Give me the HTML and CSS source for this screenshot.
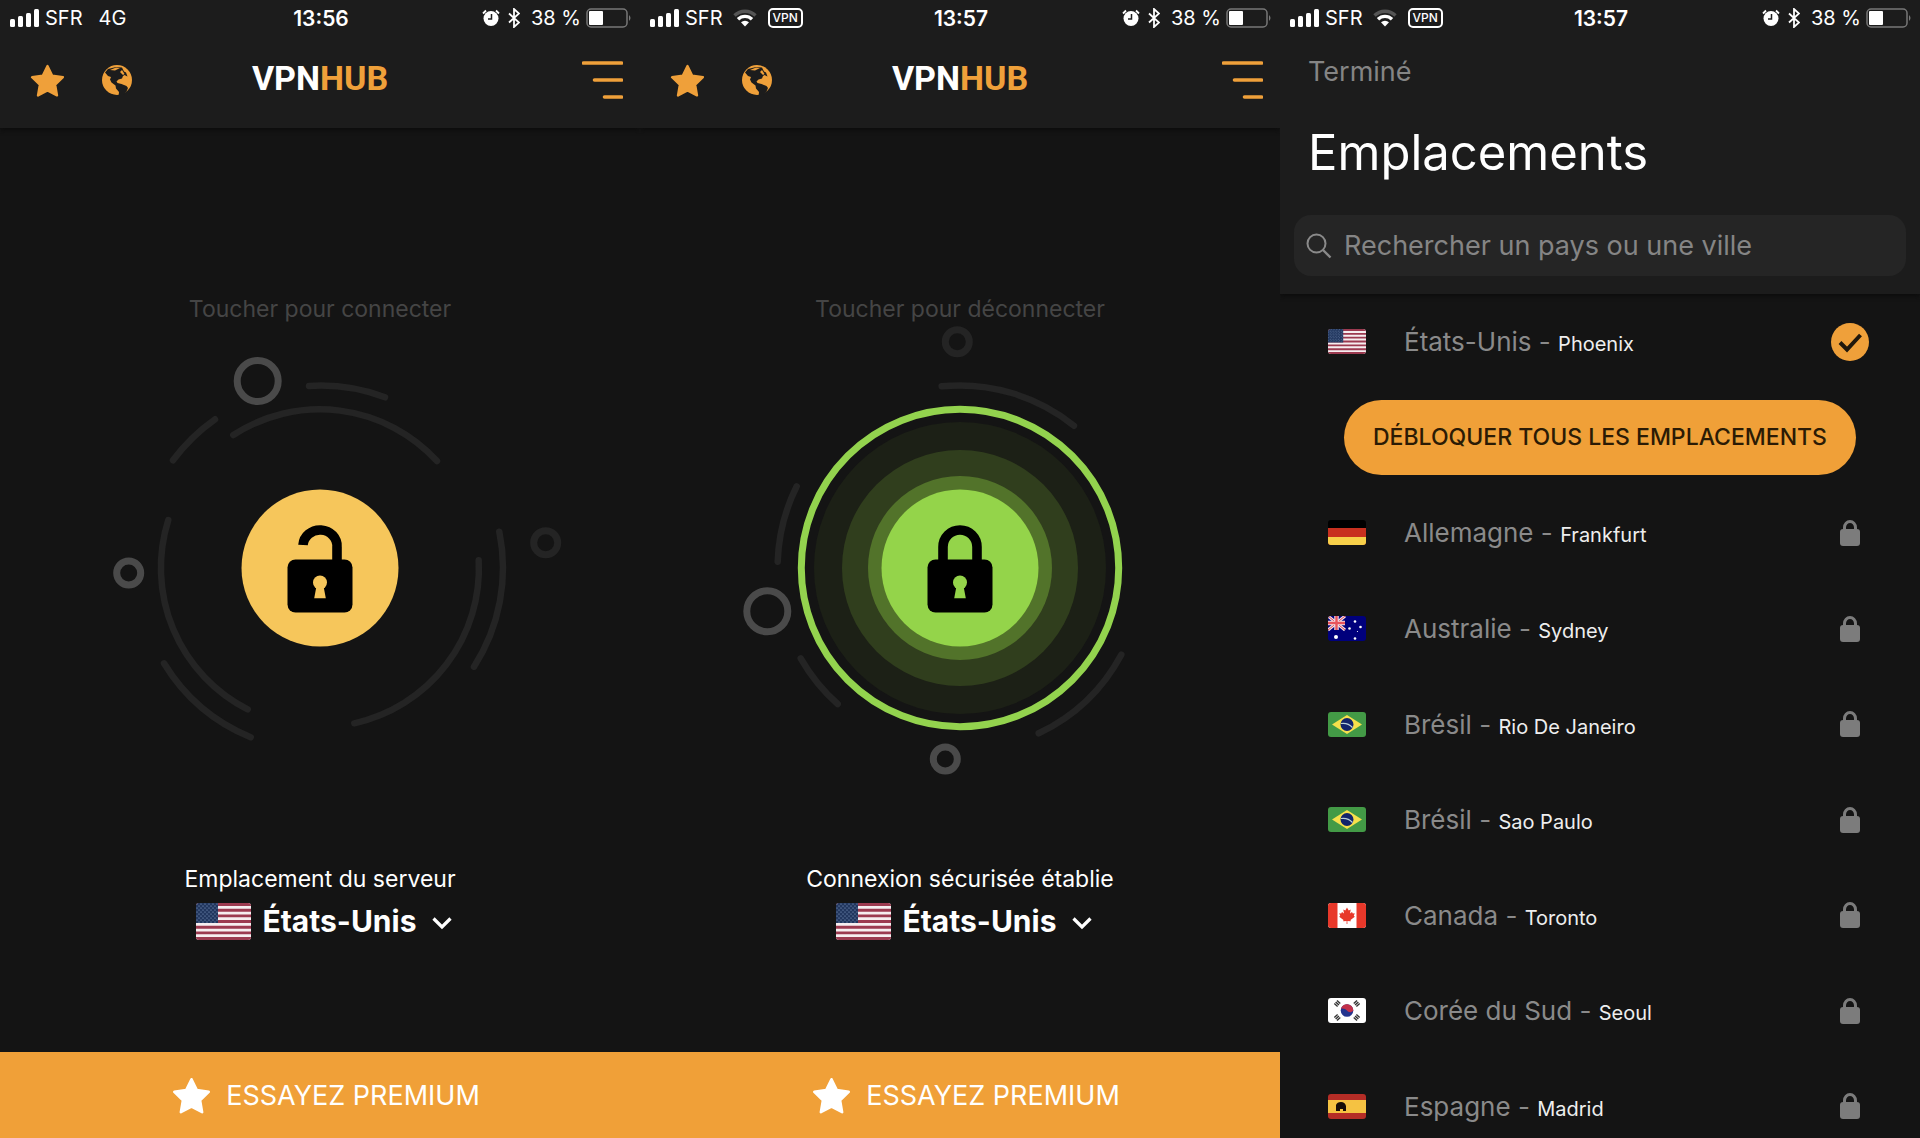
FILE: index.html
```html
<!DOCTYPE html>
<html lang="fr">
<head>
    <meta charset="UTF-8">
    <meta name="viewport" content="width=device-width, initial-scale=1.0">
    <title>VPNHUB</title>
    <link rel="stylesheet" href="styles.css">
</head>
<body>
    <!-- Icônes et drapeaux partagés -->
    <svg class="sprite" aria-hidden="true">
        <symbol id="signal" viewBox="0 0 30 18">
            <rect x="0" y="10" width="5" height="8" rx="1.5"/>
            <rect x="8" y="7" width="5" height="11" rx="1.5"/>
            <rect x="16" y="4" width="5" height="14" rx="1.5"/>
            <rect x="24" y="0" width="5" height="18" rx="1.5"/>
        </symbol>
        <symbol id="wifi" viewBox="0 0 24 18">
            <path d="M1.5 6.5a15 15 0 0 1 21 0" fill="none" stroke="#555" stroke-width="3.4"/>
            <path d="M5 10.2a10 10 0 0 1 14 0" fill="none" stroke="#fff" stroke-width="3.4"/>
            <path d="M12 17.5l-4-4.2a6 6 0 0 1 8 0z"/>
        </symbol>
        <symbol id="alarm" viewBox="0 0 18 18">
            <circle cx="9" cy="9.5" r="7.5"/>
            <path d="M1 4.5l3-3M17 4.5l-3-3" stroke="#fff" stroke-width="1.8"/>
            <path d="M9.5 5v5H6" fill="none" stroke="#1c1c1c" stroke-width="1.5"/>
        </symbol>
        <symbol id="bluetooth" viewBox="0 0 12 20">
            <path d="M1 5.5l10 9-5 4.500V1l5 4.500-10 9" fill="none" stroke="#fff" stroke-width="1.8"/>
        </symbol>
        <symbol id="battery" viewBox="0 0 46 20">
            <rect x="1" y="1" width="40" height="18" rx="4" fill="none" stroke="#777" stroke-width="1.5"/>
            <rect x="3" y="3" width="14" height="14" rx="1"/>
            <path d="M43 7q3 3 0 6z" fill="#777"/>
        </symbol>
        <symbol id="star" viewBox="0 0 36 34">
            <path d="M18 2l4.900 10 11 1.600-8 7.800 1.900 11L18 27.200l-9.800 5.200 1.900-11-8-7.800 11-1.600z" stroke="currentColor" stroke-width="2.4" stroke-linejoin="round"/>
        </symbol>
        <symbol id="globe" viewBox="0 0 30 30">
            <circle cx="15" cy="15" r="15"/>
            <path fill="#1c1c1c" d="M3 7.500L6 4l8-2 6 .500 2 4 2 1 1.500 4-3-1.500-1.500 1-1 2.500-3.500 1-2 2 1 1.500 4 1 5 2 1.500 2-1.500 3.500-3.500 4-3 3.500-1.500-2 .500-5-3-3.500-.500-3-4-3-1.500-3 1-2.500-3-1z"/>
            <path d="M8 5l6-2.500 4 .500-5 2.500zM18 7l2-2 2.500 4-1.500 1z"/>
        </symbol>
        <symbol id="menu" viewBox="0 0 41 38">
            <path d="M1.500 2h38M12.500 19h27M22.500 36h17" stroke="currentColor" stroke-width="3.6" stroke-linecap="round"/>
        </symbol>
        <symbol id="chevron" viewBox="0 0 20 14">
            <path d="M1.500 2.500l8.500 8.500 8.500-8.500" fill="none" stroke="#fff" stroke-width="3.2"/>
        </symbol>
        <symbol id="search" viewBox="0 0 26 26">
            <circle cx="10.5" cy="10.5" r="9" fill="none" stroke="#8a8a8a" stroke-width="2"/>
            <path d="M17 17l7.500 7.500" stroke="#8a8a8a" stroke-width="2.4"/>
        </symbol>
        <symbol id="check" viewBox="0 0 38 38">
            <circle cx="19" cy="19" r="19" fill="#efa03a"/>
            <path d="M9 19.500l7 7L29.500 12" fill="none" stroke="#20180c" stroke-width="4"/>
        </symbol>
        <symbol id="lock" viewBox="0 0 22 26">
            <rect x="1" y="9" width="20" height="17" rx="3"/>
            <path d="M5.500 11V7.500a5.500 6 0 0 1 11 0V11" fill="none" stroke="#7c7c7c" stroke-width="3"/>
        </symbol>

        <pattern id="stars" width="4" height="4" patternUnits="userSpaceOnUse">
            <circle cx="1" cy="1" r=".6" fill="#8fa8cc"/>
            <circle cx="3" cy="3" r=".6" fill="#8fa8cc"/>
        </pattern>
        <symbol id="flag-us" viewBox="0 0 55 37" preserveAspectRatio="none">
            <rect width="55" height="37" fill="#f6eef0"/>
            <path d="M0 1.500h55M0 7.200h55M0 12.800h55M0 18.500h55M0 24.200h55M0 29.900h55M0 35.500h55" stroke="#9c3a50" stroke-width="2.85"/>
            <rect width="22" height="20" fill="#22375f"/>
            <rect width="22" height="20" fill="url(#stars)"/>
        </symbol>
        <symbol id="flag-de" viewBox="0 0 38 25" preserveAspectRatio="none">
            <rect width="38" height="25" fill="#000"/>
            <rect y="8" width="38" height="17" fill="#c8301f"/>
            <rect y="17" width="38" height="8" fill="#f7d04a"/>
        </symbol>
        <symbol id="flag-au" viewBox="0 0 38 25" preserveAspectRatio="none">
            <rect width="38" height="25" fill="#00007c"/>
            <path d="M0 0l17 14M17 0L0 14" stroke="#f3dfe6" stroke-width="3"/>
            <path d="M0 0l17 14M17 0L0 14" stroke="#e0454f" stroke-width="1"/>
            <path d="M8.500 0v14M0 7h17" stroke="#f3dfe6" stroke-width="4.5"/>
            <path d="M8.500 0v14M0 7h17" stroke="#e8545c" stroke-width="2.4"/>
            <g fill="#fff">
                <circle cx="8" cy="21" r="2"/>
                <circle cx="27" cy="5.5" r="1.3"/>
                <circle cx="21.5" cy="12.5" r="1.3"/>
                <circle cx="32.5" cy="11" r="1.3"/>
                <circle cx="27" cy="22.5" r="1.3"/>
                <circle cx="29.5" cy="15.5" r=".6"/>
            </g>
        </symbol>
        <symbol id="flag-br" viewBox="0 0 38 25" preserveAspectRatio="none">
            <rect width="38" height="25" fill="#439a46"/>
            <path d="M4 12.500L19 3l15 9.500L19 22z" fill="#f6e04c"/>
            <circle cx="19" cy="12.5" r="6.5" fill="#12246b"/>
            <path d="M13 11.500q7-1 11.500 4" fill="none" stroke="#b9d0d8" stroke-width="1.2"/>
        </symbol>
        <symbol id="flag-ca" viewBox="0 0 38 25" preserveAspectRatio="none">
            <rect width="38" height="25" fill="#fff"/>
            <path d="M0 0h9.500v25H0zM28.500 0H38v25h-9.500z" fill="#e8382a"/>
            <path d="M19 4.500l1.700 3 2-1-.7 4 2-1.500.8 1.500 2-.2-1 2.500 1 .9-4.300 3.300.4 1.300-3.500-.4V21h-.8v-3.100l-3.500.4.4-1.300-4.300-3.300 1-.9-1-2.500 2 .2.8-1.500 2 1.500-.7-4 2 1z" fill="#e8382a"/>
        </symbol>
        <symbol id="flag-kr" viewBox="0 0 38 25" preserveAspectRatio="none">
            <rect width="38" height="25" fill="#fff"/>
            <circle cx="19" cy="12.5" r="6.3" fill="#24348f"/>
            <path d="M12.900 11a6.300 6.300 0 0 1 12.400 1.500c-2.300 3-5 1.500-6.300 0s-4.500-2.500-6.100-1.500z" fill="#c3304a"/>
            <path d="M7.500 7.500l4-4.500M30.500 7.500l-4-4.500M7.500 17.500l4 4.500M30.500 17.500l-4 4.500" stroke="#333" stroke-width="4.4" stroke-dasharray="1.4 .6"/>
        </symbol>
        <symbol id="flag-es" viewBox="0 0 38 25" preserveAspectRatio="none">
            <rect width="38" height="25" fill="#b52d26"/>
            <rect y="6" width="38" height="13" fill="#f5c242"/>
            <path d="M8 17v-6q1-3 5-3 4 0 5 4v5h-3v-2h-3v2z" fill="#170d08"/>
        </symbol>
    </svg>

    <div class="screens">
        <section class="screen">
            <div class="status-bar">
                <div class="status-left">
                    <svg class="signal"><use href="#signal"/></svg>
                    <span>SFR</span>
                    <span class="network">4G</span>
                </div>
                <span class="clock">13:56</span>
                <div class="status-right">
                    <svg class="alarm"><use href="#alarm"/></svg>
                    <svg class="bluetooth"><use href="#bluetooth"/></svg>
                    <span>38 %</span>
                    <svg class="battery"><use href="#battery"/></svg>
                </div>
            </div>
            <header class="app-header">
                <div class="header-left">
                    <button aria-label="Favoris"><svg class="star"><use href="#star"/></svg></button>
                    <button aria-label="Emplacements"><svg class="globe"><use href="#globe"/></svg></button>
                </div>
                <h1>VPN<span>HUB</span></h1>
                <button class="menu-button" aria-label="Menu"><svg class="menu"><use href="#menu"/></svg></button>
            </header>
            <main class="connect">
                <p class="hint">Toucher pour connecter</p>
                <button class="toggle" aria-label="Connecter">
                    <svg viewBox="-243 -243 486 486">
                        <g class="arcs">
                            <path d="M-86.700-133A158.700 158.700 0 0 1 117-107"/>
                            <path d="M-151.700-48A158.700 158.700 0 0 0-72.300 141.300"/>
                            <path d="M158.700-7.700A158.700 158.700 0 0 1 34.300 155.300"/>
                            <path d="M-11-182A182.500 182.500 0 0 1 65-170.700"/>
                            <path d="M-105-148.700A182.500 182.500 0 0 0-147-107.700"/>
                            <path d="M-156 95.300A182.500 182.500 0 0 0-69.300 169.300"/>
                            <path d="M179.300-36.300A182.500 182.500 0 0 1 154 98.700"/>
                        </g>
                        <circle class="orbit" cx="-62.3" cy="-187" r="20.5"/>
                        <circle class="orbit" cx="-191.3" cy="5" r="12"/>
                        <circle class="orbit dim" cx="225.7" cy="-25.3" r="12"/>
                        <circle r="78.5" fill="#f6c65b"/>
                        <path d="M-17-23A17 16 0 0 1 17-21V-6" fill="none" stroke="#000" stroke-width="9.6"/>
                        <rect x="-32.5" y="-8.5" width="65" height="53" rx="8"/>
                        <path d="M-3.500 18h7l2.300 12.300h-11.600z" fill="#f6c65b"/>
                        <circle cy="14.5" r="7" fill="#f6c65b"/>
                    </svg>
                </button>
                <p class="server-label">Emplacement du serveur</p>
                <button class="server">
                    <svg class="flag large"><use href="#flag-us"/></svg>
                    <span>États-Unis</span>
                    <svg class="chevron"><use href="#chevron"/></svg>
                </button>
            </main>
            <button class="premium">
                <svg class="star"><use href="#star"/></svg>
                ESSAYEZ PREMIUM
            </button>
        </section>

        <section class="screen">
            <div class="status-bar">
                <div class="status-left">
                    <svg class="signal"><use href="#signal"/></svg>
                    <span>SFR</span>
                    <svg class="wifi"><use href="#wifi"/></svg>
                    <span class="vpn">VPN</span>
                </div>
                <span class="clock">13:57</span>
                <div class="status-right">
                    <svg class="alarm"><use href="#alarm"/></svg>
                    <svg class="bluetooth"><use href="#bluetooth"/></svg>
                    <span>38 %</span>
                    <svg class="battery"><use href="#battery"/></svg>
                </div>
            </div>
            <header class="app-header">
                <div class="header-left">
                    <button aria-label="Favoris"><svg class="star"><use href="#star"/></svg></button>
                    <button aria-label="Emplacements"><svg class="globe"><use href="#globe"/></svg></button>
                </div>
                <h1>VPN<span>HUB</span></h1>
                <button class="menu-button" aria-label="Menu"><svg class="menu"><use href="#menu"/></svg></button>
            </header>
            <main class="connect">
                <p class="hint">Toucher pour déconnecter</p>
                <button class="toggle" aria-label="Déconnecter">
                    <svg viewBox="-243 -243 486 486">
                        <g class="arcs">
                            <path d="M-18.300-181.700A182.500 182.500 0 0 1 114-142.300"/>
                            <path d="M-163.300-81.700A182.500 182.500 0 0 0-182.300-6.300"/>
                            <path d="M-159.300 90.300A182.500 182.500 0 0 0-122.300 136"/>
                            <path d="M161.300 86.700A182.500 182.500 0 0 1 78.700 165.300"/>
                        </g>
                        <circle class="orbit dim" cx="-2.7" cy="-226.3" r="12"/>
                        <circle class="orbit" cx="-192.7" cy="43.3" r="20.5"/>
                        <circle class="orbit" cx="-14.7" cy="191" r="12"/>
                        <circle r="158.7" fill="none" stroke="#93d34e" stroke-width="7"/>
                        <circle r="146" fill="#1c2016"/>
                        <circle r="118" fill="#303e1d"/>
                        <circle r="92" fill="#52732a"/>
                        <circle r="78.5" fill="#94d44a"/>
                        <path d="M-17-6V-21A17 17 0 0 1 17-21V-6" fill="none" stroke="#000" stroke-width="9.6"/>
                        <rect x="-32.5" y="-8.5" width="65" height="53" rx="8"/>
                        <path d="M-3.500 18h7l2.300 12.300h-11.600z" fill="#94d44a"/>
                        <circle cy="14.5" r="7" fill="#94d44a"/>
                    </svg>
                </button>
                <p class="server-label">Connexion sécurisée établie</p>
                <button class="server">
                    <svg class="flag large"><use href="#flag-us"/></svg>
                    <span>États-Unis</span>
                    <svg class="chevron"><use href="#chevron"/></svg>
                </button>
            </main>
            <button class="premium">
                <svg class="star"><use href="#star"/></svg>
                ESSAYEZ PREMIUM
            </button>
        </section>

        <section class="screen">
            <div class="status-bar">
                <div class="status-left">
                    <svg class="signal"><use href="#signal"/></svg>
                    <span>SFR</span>
                    <svg class="wifi"><use href="#wifi"/></svg>
                    <span class="vpn">VPN</span>
                </div>
                <span class="clock">13:57</span>
                <div class="status-right">
                    <svg class="alarm"><use href="#alarm"/></svg>
                    <svg class="bluetooth"><use href="#bluetooth"/></svg>
                    <span>38 %</span>
                    <svg class="battery"><use href="#battery"/></svg>
                </div>
            </div>
            <header class="list-header">
                <button class="done">Terminé</button>
                <h2>Emplacements</h2>
                <label class="search-box">
                    <svg class="search"><use href="#search"/></svg>
                    <input type="search" placeholder="Rechercher un pays ou une ville" aria-label="Rechercher un pays ou une ville">
                </label>
            </header>
            <ul class="locations">
                <li>
                    <svg class="flag"><use href="#flag-us"/></svg>
                    <p>États-Unis - <span>Phoenix</span></p>
                    <svg class="check"><use href="#check"/></svg>
                </li>
                <li>
                    <button class="unlock">DÉBLOQUER TOUS LES EMPLACEMENTS</button>
                </li>
                <li>
                    <svg class="flag"><use href="#flag-de"/></svg>
                    <p>Allemagne - <span>Frankfurt</span></p>
                    <svg class="lock"><use href="#lock"/></svg>
                </li>
                <li>
                    <svg class="flag"><use href="#flag-au"/></svg>
                    <p>Australie - <span>Sydney</span></p>
                    <svg class="lock"><use href="#lock"/></svg>
                </li>
                <li>
                    <svg class="flag"><use href="#flag-br"/></svg>
                    <p>Brésil - <span>Rio De Janeiro</span></p>
                    <svg class="lock"><use href="#lock"/></svg>
                </li>
                <li>
                    <svg class="flag"><use href="#flag-br"/></svg>
                    <p>Brésil - <span>Sao Paulo</span></p>
                    <svg class="lock"><use href="#lock"/></svg>
                </li>
                <li>
                    <svg class="flag"><use href="#flag-ca"/></svg>
                    <p>Canada - <span>Toronto</span></p>
                    <svg class="lock"><use href="#lock"/></svg>
                </li>
                <li>
                    <svg class="flag"><use href="#flag-kr"/></svg>
                    <p>Corée du Sud - <span>Seoul</span></p>
                    <svg class="lock"><use href="#lock"/></svg>
                </li>
                <li>
                    <svg class="flag"><use href="#flag-es"/></svg>
                    <p>Espagne - <span>Madrid</span></p>
                    <svg class="lock"><use href="#lock"/></svg>
                </li>
            </ul>
        </section>
    </div>
</body>
</html>
```
FILE: styles.css
```css
* {
    box-sizing: border-box;
}
body {
    margin: 0;
    font-family: Inter, Roboto, sans-serif;
    background-color: #141414;
    color: white;
}
h1, h2, p, ul {
    margin: 0;
    padding: 0;
}
button {
    border: none;
    padding: 0;
    background: none;
    color: inherit;
    font: inherit;
    cursor: pointer;
}
svg {
    display: block;
    fill: currentColor;
}
.sprite {
    position: absolute;
    width: 0;
    height: 0;
}
.screens {
    display: grid;
    grid-template-columns: repeat(3, 1fr);
    height: 100vh;
    overflow: hidden;
}
.screen {
    display: flex;
    flex-direction: column;
    min-width: 0;
    min-height: 0;
}

/* Barre d'état */
.status-bar {
    display: grid;
    grid-template-columns: 1fr auto 1fr;
    align-items: center;
    flex-shrink: 0;
    height: 36px;
    padding: 0 8px 0 10px;
    background-color: #1c1c1c;
    font-size: 20px;
}
.status-left, .status-right {
    display: flex;
    align-items: center;
}
.status-right {
    justify-content: flex-end;
}
.clock {
    font-size: 21px;
    font-weight: 600;
}
.signal {
    width: 30px;
    height: 18px;
    margin-right: 5px;
}
.network {
    margin-left: 16px;
}
.wifi {
    width: 24px;
    height: 18px;
    margin-left: 10px;
}
.vpn {
    margin-left: 11px;
    padding: 0 3px;
    border: 2px solid white;
    border-radius: 5px;
    font-size: 12px;
    font-weight: 500;
    line-height: 16px;
}
.alarm {
    width: 18px;
    height: 18px;
    margin-right: 8px;
}
.bluetooth {
    width: 12px;
    height: 20px;
    margin-right: 11px;
}
.battery {
    width: 46px;
    height: 20px;
    margin-left: 5px;
}

/* En-tête */
.app-header {
    display: grid;
    grid-template-columns: 1fr auto 1fr;
    align-items: center;
    flex-shrink: 0;
    height: 92px;
    padding: 0 17px 4px;
    background-color: #1c1c1c;
    box-shadow: 0 2px 5px #0c0c0c;
    clip-path: inset(0 0 -8px 0);
}
.header-left {
    display: flex;
    align-items: center;
    gap: 37px;
    margin-left: 13px;
    color: #efa03a;
}
.header-left .star {
    width: 35px;
    height: 33px;
}
.globe {
    width: 30px;
    height: 30px;
}
.app-header h1 {
    padding-bottom: 4px;
    font-family: Roboto, sans-serif;
    font-size: 34px;
    font-weight: 700;
}
.app-header h1 span {
    color: #efa03a;
}
.menu-button {
    justify-self: end;
    color: #efa03a;
}
.menu {
    width: 41px;
    height: 38px;
}

/* Connexion */
.connect {
    display: flex;
    flex: 1;
    flex-direction: column;
    align-items: center;
    justify-content: center;
    padding-top: 54px;
}
.hint {
    color: #454545;
    font-size: 23px;
    line-height: 32px;
}
.toggle svg {
    width: 486px;
    height: 486px;
    fill: black;
}
.arcs {
    fill: none;
    stroke: #242424;
    stroke-width: 6.5;
    stroke-linecap: round;
}
.orbit {
    fill: none;
    stroke: #4a4a4a;
    stroke-width: 7;
}
.orbit.dim {
    stroke: #242424;
}
.server-label {
    margin-top: 54px;
    font-size: 23px;
    line-height: 28px;
}
.server {
    display: flex;
    align-items: center;
    gap: 12px;
    margin-top: 8px;
    padding-left: 8px;
    font-size: 30px;
    font-weight: 700;
    line-height: 40px;
}
.chevron {
    width: 20px;
    height: 14px;
    margin: 4px 0 0 4px;
}
.flag {
    width: 38px;
    height: 25px;
    border-radius: 3px;
}
.flag.large {
    width: 55px;
    height: 37px;
}
.premium {
    display: flex;
    align-items: center;
    justify-content: center;
    gap: 15px;
    height: 86px;
    padding-left: 12px;
    background-color: #f0a038;
    font-size: 27px;
}
.premium .star {
    width: 39px;
    height: 37px;
}

/* Emplacements */
.list-header {
    flex-shrink: 0;
    padding: 18px 14px;
    background-color: #1c1c1c;
    box-shadow: 0 2px 5px #0c0c0c;
    clip-path: inset(0 0 -8px 0);
}
.done {
    display: block;
    margin-left: 14px;
    color: #858585;
    font-size: 27px;
    line-height: 36px;
}
.list-header h2 {
    margin: 31px 0 31px 14px;
    font-size: 49px;
    font-weight: 400;
    line-height: 63px;
}
.search-box {
    display: flex;
    align-items: center;
    gap: 12px;
    height: 61px;
    padding: 0 12px;
    border-radius: 17px;
    background-color: #252525;
}
.search {
    width: 26px;
    height: 26px;
}
.search-box input {
    flex: 1;
    min-width: 0;
    padding: 0;
    border: none;
    outline: none;
    background: none;
    color: white;
    font: inherit;
    font-size: 27px;
}
.search-box input::placeholder {
    color: #858585;
    opacity: 1;
}
.locations {
    list-style: none;
}
.locations li {
    display: flex;
    align-items: center;
    height: 8.4vh;
    padding: 0 51px 0 48px;
}
.locations p {
    flex: 1;
    margin-left: 38px;
    color: #8a8a8a;
    font-size: 26px;
}
.locations span {
    color: #eee;
    font-size: 20px;
}
.check {
    width: 38px;
    height: 38px;
}
.lock {
    width: 22px;
    height: 26px;
    margin-right: 8px;
    color: #7c7c7c;
}
.unlock {
    flex: 1;
    height: 75px;
    margin: 0 13px 0 16px;
    border-radius: 38px;
    background-color: #f0a038;
    color: #2b1b05;
    font-size: 23px;
    font-weight: 500;
    white-space: nowrap;
}
```
